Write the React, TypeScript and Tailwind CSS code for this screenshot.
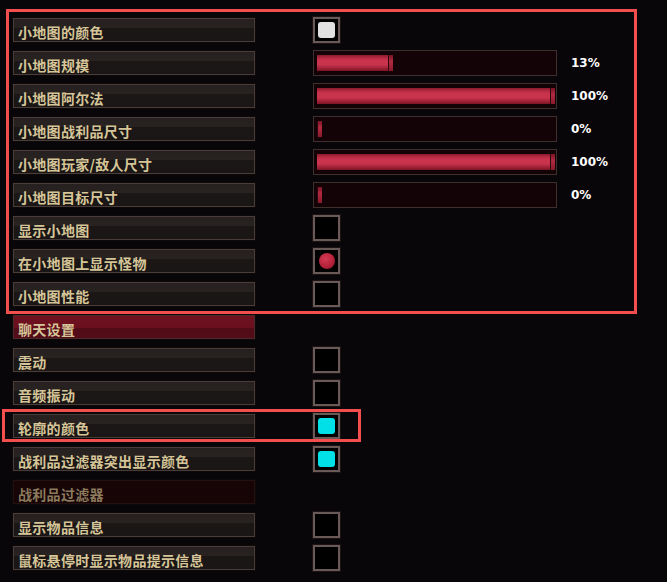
import React from "react";

type Row =
  | { kind: "check"; label: string; state: "off" | "white" | "cyan" | "ball" }
  | { kind: "slider"; label: string; value: number; fill: number }
  | { kind: "header"; label: string; dim?: boolean };

const rows: Row[] = [
  { kind: "check", label: "小地图的颜色", state: "white" },
  { kind: "slider", label: "小地图规模", value: 13, fill: 76 },
  { kind: "slider", label: "小地图阿尔法", value: 100, fill: 238 },
  { kind: "slider", label: "小地图战利品尺寸", value: 0, fill: 5 },
  { kind: "slider", label: "小地图玩家/敌人尺寸", value: 100, fill: 238 },
  { kind: "slider", label: "小地图目标尺寸", value: 0, fill: 5 },
  { kind: "check", label: "显示小地图", state: "off" },
  { kind: "check", label: "在小地图上显示怪物", state: "ball" },
  { kind: "check", label: "小地图性能", state: "off" },
  { kind: "header", label: "聊天设置" },
  { kind: "check", label: "震动", state: "off" },
  { kind: "check", label: "音频振动", state: "off" },
  { kind: "check", label: "轮廓的颜色", state: "cyan" },
  { kind: "check", label: "战利品过滤器突出显示颜色", state: "cyan" },
  { kind: "header", label: "战利品过滤器", dim: true },
  { kind: "check", label: "显示物品信息", state: "off" },
  { kind: "check", label: "鼠标悬停时显示物品提示信息", state: "off" },
];

const font = { fontFamily: '"Noto Sans CJK SC", "Noto Sans", sans-serif' };

const Label = ({ text, variant }: { text: string; variant: "plain" | "header" | "dim" }) => {
  const bg =
    variant === "header"
      ? "bg-[linear-gradient(#70111f_0%,#6a0f1f_55%,#520c18_56%,#540c19_100%)] border-[#4a2a2a]"
      : variant === "dim"
        ? "bg-[#160407] border-[#24100f]"
        : "bg-[linear-gradient(#262020_0%,#282221_40%,#1b1716_41%,#1a1615_100%)] border-[#4a3d39]";
  const color = variant === "dim" ? "text-[#8c7a5c]" : "text-[#d6c598]";
  return (
    <div
      className={`w-[242px] h-[24px] border ${bg} flex items-center pl-[4px] shadow-[0_0_0_1px_#0d0909]`}
    >
      <span className={`text-[14px] font-bold leading-none tracking-[0.3px] pt-[3px] ${color}`}>
        {text}
      </span>
    </div>
  );
};

const Check = ({ state }: { state: "off" | "white" | "cyan" | "ball" }) => (
  <div className="w-[27px] h-[26px] border-2 border-[#6a5a57] bg-black flex items-center justify-center shadow-[0_0_0_1px_#1c1414]">
    {state === "white" && <div className="w-[17px] h-[16px] rounded-[3px] bg-[#e2e2e2]" />}
    {state === "cyan" && <div className="w-[17px] h-[16px] rounded-[3px] bg-[#00e0e6]" />}
    {state === "ball" && (
      <div className="w-[16px] h-[16px] rounded-full bg-[radial-gradient(circle_at_40%_35%,#d03a52_0%,#b8233c_55%,#7a1224_100%)]" />
    )}
  </div>
);

const Slider = ({ value, fill }: { value: number; fill: number }) => (
  <div className="flex items-center">
    <div className="w-[244px] h-[26px] border border-[#3e302c] bg-[#140306] pl-[3px] py-[4px] flex">
      <div
        className="h-full flex bg-[linear-gradient(#8a1a2c_0%,#b82c44_20%,#c9344c_35%,#c9344c_60%,#a6243a_80%,#7a1424_100%)]"
        style={{ width: fill }}
      >
        <div className="flex-1" />
        <div className="w-[5px] h-full border-l border-[#2a0810] bg-[linear-gradient(#7a1424,#b02a40_40%,#8a1a2c)]" />
      </div>
    </div>
    <span className="ml-[14px] text-[12px] font-bold text-white" style={{ fontFamily: '"DejaVu Sans", sans-serif' }}>
      {value}%
    </span>
  </div>
);

export default function App() {
  return (
    <div className="relative w-[667px] h-[582px] bg-[#09060a] overflow-hidden" style={font}>
      <div className="flex flex-col gap-[9px] pt-[18px] pl-[13px]">
        {rows.map((r, i) => (
          <div key={i} className="flex items-center h-[24px]">
            <Label
              text={r.label}
              variant={r.kind === "header" ? (r.dim ? "dim" : "header") : "plain"}
            />
            <div className="ml-[58px]">
              {r.kind === "check" && <Check state={r.state} />}
              {r.kind === "slider" && <Slider value={r.value} fill={r.fill} />}
            </div>
          </div>
        ))}
      </div>
      {/* annotation outlines */}
      <div className="absolute left-[6px] top-[9px] w-[631px] h-[305px] border-[3px] border-[#f24e4e]" />
      <div className="absolute left-[2px] top-[409px] w-[359px] h-[33px] border-[3px] border-[#f24e4e]" />
    </div>
  );
}
